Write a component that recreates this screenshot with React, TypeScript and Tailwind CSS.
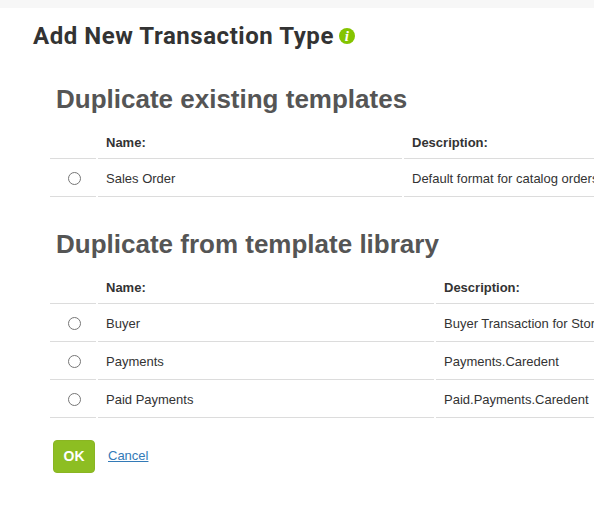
const existing = [
  { name: 'Sales Order', description: 'Default format for catalog orders' },
];

const library = [
  { name: 'Buyer', description: 'Buyer Transaction for Store' },
  { name: 'Payments', description: 'Payments.Caredent' },
  { name: 'Paid Payments', description: 'Paid.Payments.Caredent' },
];

function TemplateTable({ rows, columns }: { rows: { name: string; description: string }[]; columns: string }) {
  return (
    <div className={`ml-[50px] grid gap-x-[2px] ${columns} font-['Liberation_Sans',sans-serif] text-[13px] text-[#333]`}>
      <div className="h-[39px] border-b border-[#dcdcdc]" />
      <div className="flex h-[39px] items-center border-b border-[#dcdcdc] pl-2 pt-[8px] font-bold">Name:</div>
      <div className="flex h-[39px] items-center whitespace-nowrap border-b border-[#dcdcdc] pl-2 pt-[8px] font-bold">Description:</div>
      {rows.map((row) => (
        <div key={row.name} className="contents">
          <div className="flex h-[38px] items-center justify-center border-b border-[#dcdcdc] pl-[2px] pt-[1px]">
            <span className="h-[13px] w-[13px] rounded-full border border-[#767676] bg-white" />
          </div>
          <div className="flex h-[38px] items-center border-b border-[#dcdcdc] pl-2 pt-[2px]">{row.name}</div>
          <div className="flex h-[38px] items-center whitespace-nowrap border-b border-[#dcdcdc] pl-2 pt-[2px]">{row.description}</div>
        </div>
      ))}
    </div>
  );
}

export default function App() {
  return (
    <div className="h-[506px] w-[594px] overflow-hidden bg-white">
      <div className="h-2 bg-[#f7f7f7]" />
      <div className="flex items-center pl-[33px] pt-[12px]">
        <h1 className="font-['Roboto',sans-serif] text-[24px] font-bold leading-[32px] tracking-[0.55px] text-[#333]">
          Add New Transaction Type
        </h1>
        <span className="ml-[5px] flex h-4 w-4 items-center justify-center rounded-full bg-[#84c400] font-['Liberation_Serif',serif] text-[15px] font-bold italic leading-none text-white">
          i
        </span>
      </div>

      <h2 className="ml-[56px] mt-[29px] font-['Liberation_Sans',sans-serif] text-[26px] font-bold leading-[36px] text-[#555]">
        Duplicate existing templates
      </h2>
      <div className="mt-[3px]">
        <TemplateTable rows={existing} columns="grid-cols-[46px_304px_300px]" />
      </div>

      <h2 className="ml-[56px] mt-[29px] font-['Liberation_Sans',sans-serif] text-[26px] font-bold leading-[36px] text-[#555]">
        Duplicate from template library
      </h2>
      <div className="mt-[3px]">
        <TemplateTable rows={library} columns="grid-cols-[46px_336px_300px]" />
      </div>

      <div className="ml-[53px] mt-[22px] flex items-center">
        <button className="h-[33px] w-[42px] rounded-[4px] border border-[#8ab523] bg-[#8dbe22] font-['Liberation_Sans',sans-serif] text-[14px] font-bold text-white">
          OK
        </button>
        <a className="ml-[13px] mb-[2px] font-['Liberation_Sans',sans-serif] text-[13px] text-[#337ab7] underline" href="#">
          Cancel
        </a>
      </div>
    </div>
  );
}
